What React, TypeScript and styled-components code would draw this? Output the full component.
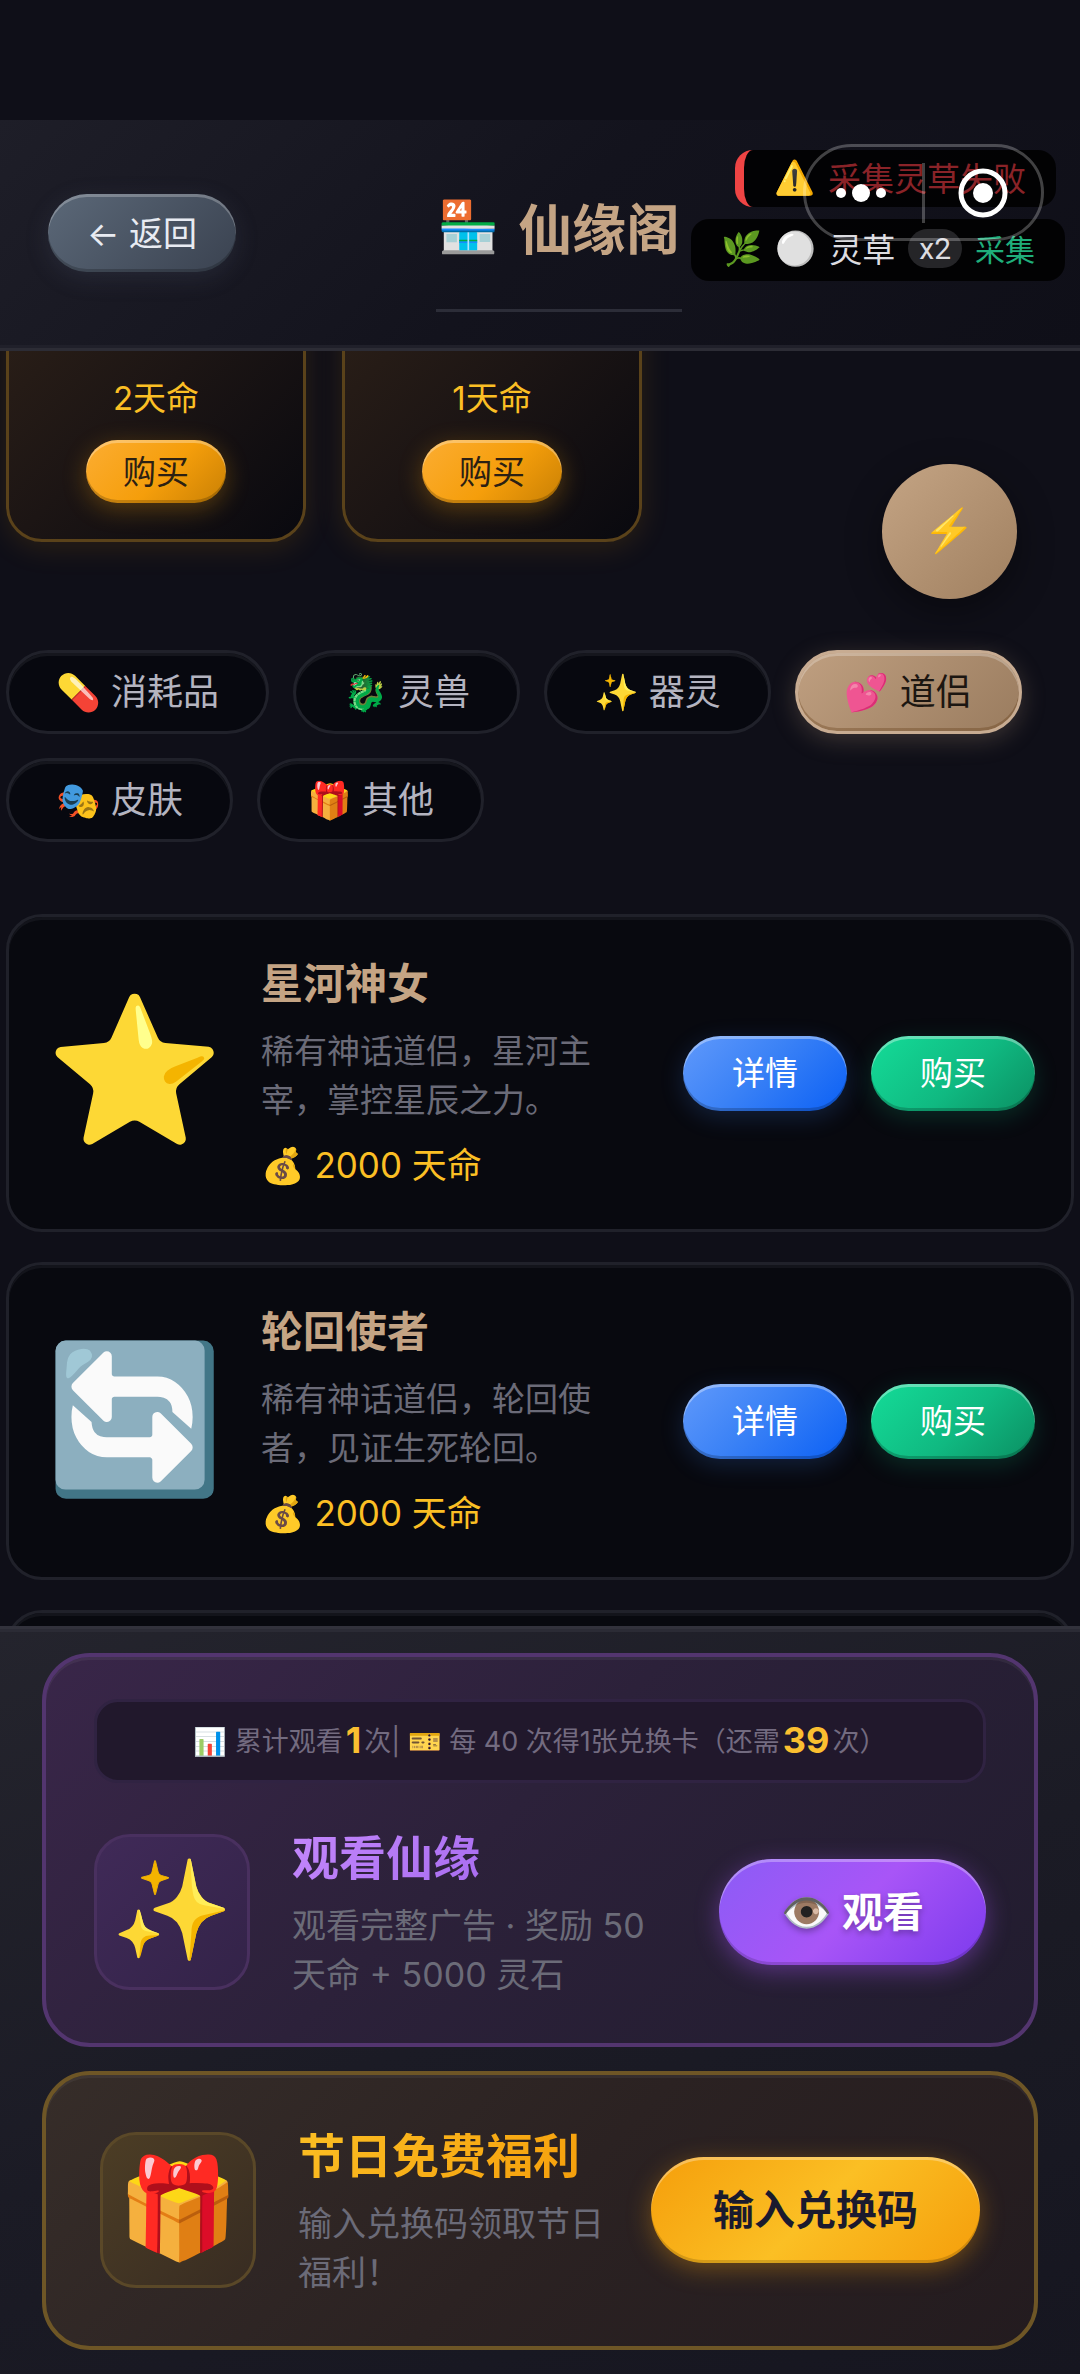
import React, { useLayoutEffect, useRef } from "react";
import styled, { createGlobalStyle } from "styled-components";

const Global = createGlobalStyle`
  * { box-sizing: border-box; }
  body { margin: 0; background: #0f0f18; }
  button { font-family: inherit; border: 0; margin: 0; padding: 0; white-space: nowrap; }
  h1, h2, p { margin: 0; }
`;

const Screen = styled.div`
  position: relative;
  display: flex;
  flex-direction: column;
  height: 100vh;
  padding-top: 120px;
  overflow: hidden;
  background: #0f0f18;
  font-family: Inter, "Noto Sans CJK SC", "Noto Color Emoji", sans-serif;
`;

const Header = styled.header`
  position: relative;
  flex: none;
  display: flex;
  align-items: center;
  justify-content: space-between;
  height: 231px;
  padding: 0 48px 3px;
  border-bottom: 3px solid #2c2c35;
  background: linear-gradient(135deg, #1e1e28 0%, #13131d 50%, #0f0f18 100%);
  box-shadow: inset 0 -3px 0 #20202a;
`;

const BackButton = styled.button`
  height: 78px;
  width: 188px;
  padding-bottom: 3px;
  border-radius: 39px;
  font-size: 34px;
  color: #e8ebf2;
  background: linear-gradient(135deg, #5b6878, #3a4250);
  box-shadow: inset 0 3px 0 rgba(255, 255, 255, 0.25), inset 0 -3px 0 rgba(0, 0, 0, 0.2), 0 6px 24px rgba(100, 110, 140, 0.18);
`;

const Title = styled.h1`
  display: flex;
  align-items: center;
  gap: 18px;
  height: 158px;
  padding: 0 2px 10px;
  border-bottom: 3px solid #2c2d38;
  font-size: 54px;
  font-weight: 700;
  color: #c4a484;
`;

const TitleIcon = styled.span`
  font-size: 50px;
`;

const HeaderEnd = styled.div`
  width: 150px;
`;

const ToastStack = styled.div`
  position: absolute;
  z-index: 2;
  top: 150px;
  right: 15px;
  display: flex;
  flex-direction: column;
  align-items: flex-end;
  gap: 12px;
`;

const Toast = styled.div<{ $error?: boolean }>`
  display: flex;
  align-items: center;
  gap: 13px;
  height: ${(p) => (p.$error ? 57 : 62)}px;
  margin-right: ${(p) => (p.$error ? 9 : 0)}px;
  padding: 0 30px 4px;
  border-left: ${(p) => (p.$error ? "9px solid #ef4444" : "0")};
  border-radius: 18px;
  background: rgba(0, 0, 0, 0.85);
  font-size: 33px;
  color: ${(p) => (p.$error ? "#8a2328" : "#dcdce0")};
`;

const Count = styled.span`
  padding: 0 11px;
  border-radius: 20px;
  background: #252528;
  font-family: Roboto, sans-serif;
  font-size: 30px;
  line-height: 39px;
`;

const Gain = styled.span`
  font-size: 30px;
  color: #1fae7b;
`;

const Capsule = styled.div`
  position: absolute;
  z-index: 3;
  top: 144px;
  right: 36px;
  display: flex;
  align-items: center;
  width: 241px;
  height: 97px;
  border: 3px solid rgba(255, 255, 255, 0.25);
  border-radius: 49px;
`;

const CapsuleButton = styled.button`
  flex: 1;
  display: grid;
  place-items: center;
  height: 91px;
  background: transparent;
`;

const CapsuleRule = styled.span`
  width: 3px;
  height: 60px;
  background: rgba(255, 255, 255, 0.25);
`;

const Main = styled.main`
  flex: 1;
  min-height: 0;
  padding: 0 6px;
  overflow-y: auto;
  scrollbar-width: none;
`;

const Offers = styled.section`
  display: flex;
  gap: 36px;
  margin-bottom: 108px;
`;

const Offer = styled.article`
  display: flex;
  flex-direction: column;
  align-items: center;
  justify-content: flex-end;
  width: 300px;
  height: 291px;
  padding: 36px;
  border: 3px solid #5a421a;
  border-radius: 36px;
  background: linear-gradient(135deg, #2e2118 0%, #1c1514 50%, #09090f 100%);
  box-shadow: 0 6px 30px rgba(245, 158, 11, 0.12);
`;

const OfferPrice = styled.p`
  font-size: 33px;
  line-height: 48px;
  margin-bottom: 18px;
  color: #fbbf24;
`;

const OfferButton = styled.button`
  width: 140px;
  height: 63px;
  padding-bottom: 4px;
  border-radius: 32px;
  font-size: 33px;
  color: #2b2013;
  background: linear-gradient(135deg, #fcad32 0%, #f59e0b 55%, #c98004 100%);
  box-shadow: inset 0 3px 0 rgba(255, 255, 255, 0.3), inset 0 -3px 0 rgba(0, 0, 0, 0.2), 0 6px 24px rgba(245, 158, 11, 0.3);
`;

const Tabs = styled.nav`
  display: flex;
  flex-wrap: wrap;
  gap: 24px;
  margin-bottom: 72px;
`;

const Tab = styled.button<{ $active?: boolean }>`
  height: 84px;
  padding: 0 47px 6px;
  border: 3px solid ${(p) => (p.$active ? "#c8ac92" : "#20212a")};
  border-radius: 42px;
  font-size: 36px;
  color: ${(p) => (p.$active ? "#1c1611" : "#b4b4c0")};
  background: ${(p) => (p.$active ? "linear-gradient(135deg, #bf9f80, #9a7c5f)" : "#07080f")};
  box-shadow: ${(p) =>
    p.$active
      ? "inset 0 3px 0 rgba(255,255,255,.25), inset 0 -3px 0 rgba(90,50,10,.3), 0 6px 24px rgba(196,164,132,.25)"
      : "inset 0 3px 0 #15161d"};
`;

const List = styled.section`
  display: flex;
  flex-direction: column;
  gap: 30px;
  padding-bottom: 30px;
`;

const Item = styled.article`
  flex: none;
  display: flex;
  align-items: center;
  gap: 36px;
  height: 318px;
  padding: 36px;
  border: 3px solid #20212a;
  border-radius: 36px;
  background: #08090f;
  box-shadow: inset 0 3px 0 #13141b;
`;

const ItemIcon = styled.span`
  flex: none;
  width: 180px;
  padding-bottom: 8px;
  font-size: 144px;
  line-height: 180px;
`;

const ItemText = styled.div`
  flex: 1;
  min-width: 0;
  padding-right: 36px;
`;

const ItemName = styled.h2`
  margin-bottom: 12px;
  font-size: 42px;
  line-height: 62px;
  color: #c4a484;
`;

const Description = styled.p<{ $large?: boolean }>`
  font-size: ${(p) => (p.$large ? 34 : 33)}px;
  line-height: 49px;
  color: #6b6b78;
`;

const ItemPrice = styled.p`
  margin-top: 12px;
  font-size: 35px;
  line-height: 56px;
  color: #fbbf24;
`;

const Actions = styled.div`
  display: flex;
  gap: 24px;
`;

const Action = styled.button<{ $buy?: boolean }>`
  width: 164px;
  height: 75px;
  padding-bottom: 4px;
  border-radius: 38px;
  font-size: 33px;
  color: #fff;
  background: ${(p) =>
    p.$buy
      ? "linear-gradient(135deg, #14dc98 0%, #10b981 55%, #0b8f62 100%)"
      : "linear-gradient(135deg, #6099fb 0%, #3b82f6 45%, #0b60f5 100%)"};
  box-shadow: inset 0 3px 0 rgba(255, 255, 255, 0.35), inset 0 -3px 0 rgba(0, 0, 0, 0.2),
    0 6px 24px ${(p) => (p.$buy ? "rgba(16,185,129,.2)" : "rgba(59,130,246,.2)")};
`;

const Floating = styled.button`
  position: absolute;
  z-index: 1;
  top: 464px;
  right: 63px;
  width: 135px;
  height: 135px;
  padding-bottom: 4px;
  border-radius: 50%;
  font-size: 42px;
  background: linear-gradient(135deg, #c4a484, #a08060);
  box-shadow: 0 12px 36px rgba(0, 0, 0, 0.4);
`;

const Footer = styled.footer`
  flex: none;
  display: flex;
  flex-direction: column;
  gap: 24px;
  padding: 24px 42px;
  border-top: 3px solid #32323c;
  background: linear-gradient(160deg, #24242d 0%, #1b1b25 50%, #161620 100%);
  box-shadow: inset 0 3px 0 #2b2b35;
`;

const Panel = styled.section<{ $gold?: boolean }>`
  padding: ${(p) => (p.$gold ? "46px 54px 47px" : "42px 48px")};
  border: 4px solid ${(p) => (p.$gold ? "#6e5626" : "#53356f")};
  border-radius: 48px;
  background: ${(p) =>
    p.$gold
      ? "linear-gradient(135deg, #362d29 0%, #2b2222 50%, #231b1f 100%)"
      : "linear-gradient(135deg, #392649 0%, #2c213a 45%, #211c2e 100%)"};
  box-shadow: inset 0 3px 0 rgba(255, 255, 255, 0.05);
`;

const Stats = styled.p`
  display: flex;
  align-items: center;
  justify-content: center;
  height: 84px;
  margin-bottom: 40px;
  padding-bottom: 3px;
  border: 3px solid #302342;
  border-radius: 24px;
  background: #21182c;
  font-size: 27px;
  white-space: pre;
  color: #736b80;
`;

const Strong = styled.strong`
  margin: 0 3px;
  font-size: 36px;
  color: #fbbf30;
`;

const Row = styled.div`
  display: flex;
  align-items: center;
  gap: 42px;
  min-height: 178px;
`;

const Badge = styled.span<{ $gold?: boolean }>`
  flex: none;
  display: flex;
  align-items: center;
  justify-content: center;
  width: 156px;
  height: 156px;
  padding-bottom: 8px;
  border: 3px solid ${(p) => (p.$gold ? "#5a4828" : "#49305f")};
  border-radius: 36px;
  font-size: 98px;
  background: ${(p) => (p.$gold ? "linear-gradient(135deg, #4c3d25, #382c22)" : "linear-gradient(135deg, #402a58, #332348)")};
`;

const RowText = styled.div`
  flex: 1;
  min-width: 0;
`;

const RowTitle = styled.h2<{ $gold?: boolean }>`
  width: max-content;
  margin-bottom: 10px;
  font-size: 47px;
  line-height: 66px;
  color: transparent;
  background: ${(p) => (p.$gold ? "linear-gradient(135deg, #fbbf24, #f59e0b)" : "linear-gradient(135deg, #c488fc, #a86cf0)")};
  background-clip: text;
`;

const BigButton = styled.button<{ $gold?: boolean }>`
  flex: none;
  height: 106px;
  padding: 0 62px 6px;
  border-radius: 53px;
  font-size: 41px;
  font-weight: 700;
  color: ${(p) => (p.$gold ? "#1a1a2e" : "#fff")};
  text-shadow: ${(p) => (p.$gold ? "none" : "0 3px 6px rgba(0,0,0,.3)")};
  background: ${(p) =>
    p.$gold
      ? "linear-gradient(135deg, #f59e0b 0%, #fbbf24 50%, #f59e0b 100%)"
      : "linear-gradient(135deg, #8b5cf6 0%, #a855f7 50%, #7c3aed 100%)"};
  box-shadow: inset 0 3px 0 rgba(255, 255, 255, 0.3), inset 0 -3px 0 rgba(0, 0, 0, 0.15),
    0 6px 24px ${(p) => (p.$gold ? "rgba(245,158,11,.35)" : "rgba(168,85,247,.4)")};
`;

const offers = ["2天命", "1天命"];
const tabs = ["💊 消耗品", "🐉 灵兽", "✨ 器灵", "💕 道侣", "🎭 皮肤", "🎁 其他"];
const items = [
  { icon: "⭐", name: "星河神女", text: "稀有神话道侣，星河主宰，掌控星辰之力。" },
  { icon: "🔄", name: "轮回使者", text: "稀有神话道侣，轮回使者，见证生死轮回。" },
];

export default function App() {
  const main = useRef<HTMLElement>(null);
  useLayoutEffect(() => {
    if (main.current) main.current.scrollTop = 100;
  }, []);
  return (
    <Screen>
      <Global />
      <Header>
        <BackButton>← 返回</BackButton>
        <Title>
          <TitleIcon>🏪</TitleIcon>仙缘阁
        </Title>
        <HeaderEnd />
      </Header>
      <ToastStack>
        <Toast $error>
          <span>⚠️</span>
          <span>采集灵草失败</span>
        </Toast>
        <Toast>
          <span>🌿</span>
          <span>⚪</span>
          <span>灵草</span>
          <Count>x2</Count>
          <Gain>采集</Gain>
        </Toast>
      </ToastStack>
      <Capsule>
        <CapsuleButton aria-label="更多">
          <svg width="58" height="20" viewBox="0 0 58 20" fill="#fff">
            <circle cx="6" cy="10" r="5" />
            <circle cx="26" cy="10" r="9" />
            <circle cx="46" cy="10" r="5" />
          </svg>
        </CapsuleButton>
        <CapsuleRule />
        <CapsuleButton aria-label="关闭">
          <svg width="50" height="50" viewBox="0 0 50 50">
            <circle cx="25" cy="25" r="22" fill="none" stroke="#fff" strokeWidth="5" />
            <circle cx="25" cy="25" r="10" fill="#fff" />
          </svg>
        </CapsuleButton>
      </Capsule>
      <Main ref={main}>
        <Offers>
          {offers.map((price) => (
            <Offer key={price}>
              <OfferPrice>{price}</OfferPrice>
              <OfferButton>购买</OfferButton>
            </Offer>
          ))}
        </Offers>
        <Tabs>
          {tabs.map((t) => (
            <Tab key={t} $active={t.includes("道侣")}>
              {t}
            </Tab>
          ))}
        </Tabs>
        <List>
          {items.map((it) => (
            <Item key={it.name}>
              <ItemIcon>{it.icon}</ItemIcon>
              <ItemText>
                <ItemName>{it.name}</ItemName>
                <Description>{it.text}</Description>
                <ItemPrice>💰 2000 天命</ItemPrice>
              </ItemText>
              <Actions>
                <Action>详情</Action>
                <Action $buy>购买</Action>
              </Actions>
            </Item>
          ))}
          <Item aria-hidden />
        </List>
      </Main>
      <Floating aria-label="快捷">⚡</Floating>
      <Footer>
        <Panel>
          <Stats>
            📊 累计观看<Strong>1</Strong>次| 🎫 每 40 次得1张兑换卡（还需<Strong>39</Strong>次）
          </Stats>
          <Row>
            <Badge>✨</Badge>
            <RowText>
              <RowTitle>观看仙缘</RowTitle>
              <Description $large>观看完整广告 · 奖励 50 天命 + 5000 灵石</Description>
            </RowText>
            <BigButton>👁️ 观看</BigButton>
          </Row>
        </Panel>
        <Panel $gold>
          <Row>
            <Badge $gold>🎁</Badge>
            <RowText>
              <RowTitle $gold>节日免费福利</RowTitle>
              <Description $large>输入兑换码领取节日福利！</Description>
            </RowText>
            <BigButton $gold>输入兑换码</BigButton>
          </Row>
        </Panel>
      </Footer>
    </Screen>
  );
}
